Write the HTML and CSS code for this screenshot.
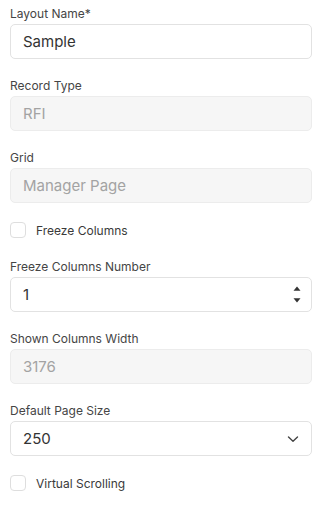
FILE: index.html
```html
<!DOCTYPE html>
<html>
<head>
<meta charset="utf-8">
<link rel="stylesheet" href="styles.css">
</head>
<body>
<form class="form">
  <div class="field">
    <label class="label">Layout Name*</label>
    <div class="input">Sample</div>
  </div>
  <div class="field">
    <label class="label">Record Type</label>
    <div class="input disabled">RFI</div>
  </div>
  <div class="field">
    <label class="label">Grid</label>
    <div class="input disabled">Manager Page</div>
  </div>
  <div class="check-row">
    <span class="checkbox"></span>
    <span class="check-label">Freeze Columns</span>
  </div>
  <div class="field">
    <label class="label">Freeze Columns Number</label>
    <div class="input with-icon">
      <span>1</span>
      <svg class="spinner" width="10" height="17" viewBox="0 0 10 17">
        <path d="M5 0.5 L8.5 4.8 L1.5 4.8 Z" fill="#333"/>
        <path d="M1.5 12.2 L8.5 12.2 L5 16.5 Z" fill="#333"/>
      </svg>
    </div>
  </div>
  <div class="field">
    <label class="label">Shown Columns Width</label>
    <div class="input disabled">3176</div>
  </div>
  <div class="field">
    <label class="label">Default Page Size</label>
    <div class="input with-icon">
      <span>250</span>
      <svg class="chevron" width="12" height="8" viewBox="0 0 12 8">
        <path d="M1.5 2 L6 6.2 L10.5 2" fill="none" stroke="#444" stroke-width="1.4" stroke-linecap="round" stroke-linejoin="round"/>
      </svg>
    </div>
  </div>
  <div class="check-row last">
    <span class="checkbox"></span>
    <span class="check-label">Virtual Scrolling</span>
  </div>
</form>
</body>
</html>
```

FILE: styles.css
```css
html, body {
  margin: 0;
  padding: 0;
  background: #ffffff;
}

body {
  font-family: Inter, "Liberation Sans", sans-serif;
  color: #222;
}

.form {
  display: flex;
  flex-direction: column;
  padding: 6px 8px 0 10px;
}

.field {
  display: flex;
  flex-direction: column;
  margin-bottom: 19px;
}

.label {
  font-size: 12px;
  line-height: 16px;
  color: #454545;
  margin-bottom: 2px;
}

.input {
  box-sizing: border-box;
  height: 35px;
  border: 1px solid #e2e2e2;
  border-radius: 5px;
  padding: 0 11px 0 12px;
  font-size: 15px;
  line-height: 33px;
  color: #333;
  background: #fff;
}

.input.disabled {
  background: #f6f6f6;
  border-color: #ececec;
  color: #a3a3a3;
}

.input.with-icon {
  display: flex;
  align-items: center;
  justify-content: space-between;
}

.spinner {
  display: block;
  margin-right: -2px;
}

.chevron {
  display: block;
  margin-right: 1px;
}

.check-row {
  display: flex;
  align-items: center;
  gap: 10px;
  height: 16px;
  margin-bottom: 21px;
}

.checkbox {
  box-sizing: border-box;
  width: 16px;
  height: 16px;
  border: 1px solid #dedede;
  border-radius: 4px;
  background: #fff;
}

.check-label {
  font-size: 12px;
  color: #3a3a3a;
}
```
